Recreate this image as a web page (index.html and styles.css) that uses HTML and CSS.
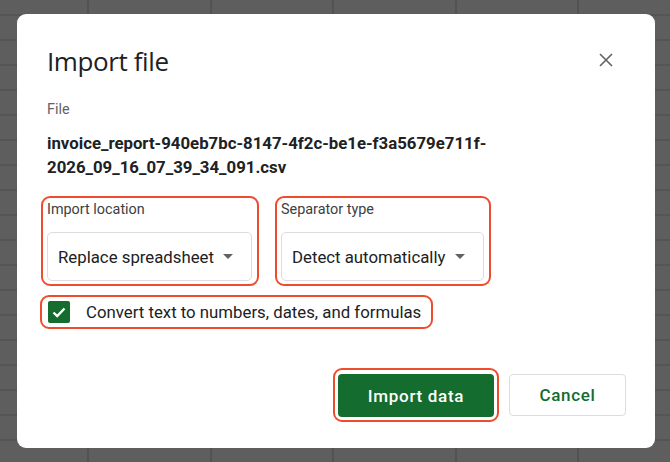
FILE: index.html
```html
<!DOCTYPE html>
<html lang="en">
<head>
  <meta charset="UTF-8">
  <title>Import file</title>
  <link rel="stylesheet" href="styles.css">
</head>
<body>
  <div class="dialog">
    <div class="header">
      <h1>Import file</h1>
      <button class="close" aria-label="Close">
        <svg width="14" height="14" viewBox="0 0 14 14"><path d="M1 1L13 13M13 1L1 13" stroke="#5f6368" stroke-width="1.6" fill="none"/></svg>
      </button>
    </div>

    <div class="field-label">File</div>
    <div class="filename">invoice_report-940eb7bc-8147-4f2c-be1e-f3a5679e711f-<br>2026_09_16_07_39_34_091.csv</div>

    <div class="options">
      <div class="group mark loc">
        <div class="group-label">Import location</div>
        <div class="select">
          <span>Replace spreadsheet</span>
          <span class="caret"></span>
        </div>
      </div>
      <div class="group mark sep">
        <div class="group-label">Separator type</div>
        <div class="select">
          <span>Detect automatically</span>
          <span class="caret"></span>
        </div>
      </div>
    </div>

    <div class="check-row mark">
      <span class="checkbox">
        <svg width="16" height="16" viewBox="0 0 16 16"><path d="M2.5 8.5L6.2 12L13.5 4.5" stroke="#fff" stroke-width="2.4" fill="none"/></svg>
      </span>
      <span>Convert text to numbers, dates, and formulas</span>
    </div>

    <div class="actions">
      <div class="mark primary-wrap">
        <button class="btn primary">Import data</button>
      </div>
      <button class="btn secondary">Cancel</button>
    </div>
  </div>
</body>
</html>
```

FILE: styles.css
```css
body {
  margin: 0;
  height: 462px;
  overflow: hidden;
  font-family: Roboto, 'Liberation Sans', sans-serif;
  color: #202124;
  background-color: #5e5e5e;
  background-image:
    repeating-linear-gradient(90deg, transparent 0 87px, #525252 87px 89px, transparent 89px 122.5px),
    repeating-linear-gradient(0deg, transparent 0 23px, #555 23px 25px);
  background-position: 0 2px;
}
.dialog {
  box-sizing: border-box;
  width: 638px;
  height: 434px;
  margin: 14px 0 0 17px;
  padding: 30px 29px 0 30px;
  background: #fff;
  border-radius: 9px;
  display: flex;
  flex-direction: column;
}
.header {
  display: flex;
  justify-content: space-between;
  align-items: flex-start;
}
h1 {
  margin: 0;
  font-family: 'Open Sans', Roboto, sans-serif;
  font-weight: 400;
  font-size: 26px;
  line-height: 34px;
  letter-spacing: -0.4px;
  color: #202124;
}
.close {
  border: none;
  background: none;
  padding: 0;
  margin: 9px 13px 0 0;
  width: 14px;
  height: 14px;
  cursor: pointer;
}
.field-label {
  margin-top: 22px;
  font-size: 14.4px;
  line-height: 20px;
  color: #5f6368;
}
.filename {
  margin-top: 11px;
  font-size: 16.8px;
  font-weight: 700;
  line-height: 24px;
  color: #202124;
}
.mark {
  box-sizing: border-box;
  border: 2px solid #ef4c2e;
  border-radius: 9px;
}
.options {
  display: flex;
  gap: 16px;
  margin: 17px 0 0 -6px;
}
.group {
  height: 90px;
  padding: 2px 5px 0 4px;
}
.loc { width: 218px; }
.sep { width: 216px; }
.group-label {
  font-size: 14.4px;
  line-height: 20px;
  color: #3c4043;
  margin-bottom: 12px;
}
.select {
  box-sizing: border-box;
  height: 49px;
  border: 1px solid #dadce0;
  border-radius: 5px;
  padding: 0 18px 0 10px;
  display: flex;
  align-items: center;
  justify-content: space-between;
  font-size: 16.8px;
  color: #202124;
}
.caret {
  width: 0;
  height: 0;
  border-left: 5px solid transparent;
  border-right: 5px solid transparent;
  border-top: 5px solid #5f6368;
}
.check-row {
  align-self: flex-start;
  width: 393px;
  height: 34px;
  margin: 9px 0 0 -7px;
  padding: 0 0 0 6px;
  display: flex;
  align-items: center;
  gap: 16px;
  font-size: 16.8px;
  color: #202124;
}
.checkbox {
  width: 22px;
  height: 22px;
  border-radius: 2px;
  background: #146c2e;
  display: flex;
  align-items: center;
  justify-content: center;
}
.actions {
  display: flex;
  justify-content: flex-end;
  align-items: center;
  gap: 10px;
  margin-top: 39px;
}
.primary-wrap {
  width: 166px;
  height: 54px;
  padding: 4px 3px;
}
.btn {
  font-family: Roboto, 'Liberation Sans', sans-serif;
  font-size: 17px;
  font-weight: 500;
  letter-spacing: 0.7px;
  border-radius: 4px;
  cursor: pointer;
}
.primary {
  width: 156px;
  height: 43px;
  border: none;
  background: #146c2e;
  color: #fff;
}
.secondary {
  width: 117px;
  height: 42px;
  border: 1px solid #dadce0;
  background: #fff;
  color: #146c2e;
}
```
